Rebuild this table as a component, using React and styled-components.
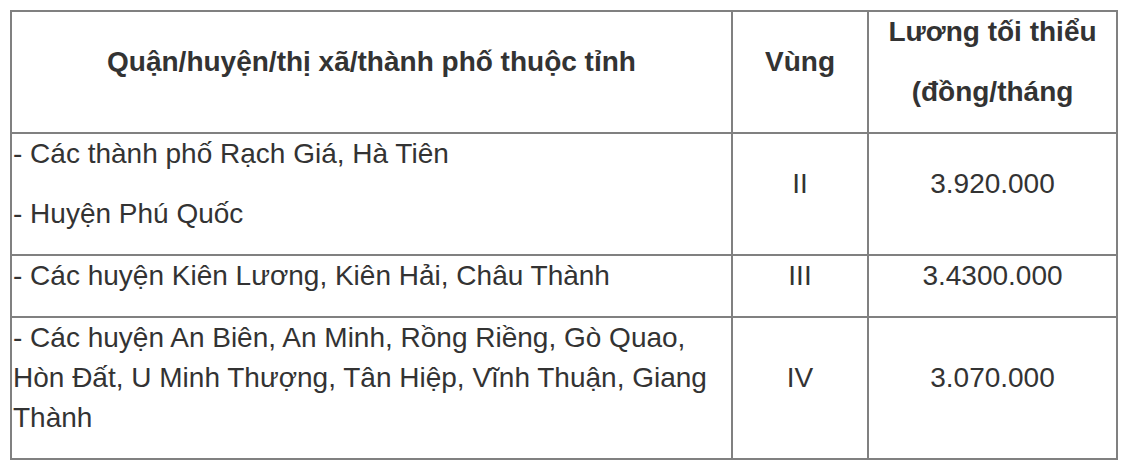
import styled, { createGlobalStyle } from 'styled-components';

const GlobalStyle = createGlobalStyle`
  body {
    margin: 0;
    background: #ffffff;
    font-family: "Liberation Sans", Arial, Helvetica, sans-serif;
    color: #333333;
  }
`;

const Page = styled.div`
  padding: 10px;
`;

const Table = styled.table`
  width: 1106px;
  table-layout: fixed;
  border-collapse: collapse;
  font-size: 28px;
`;

const Cell = styled.td`
  border: 2px solid #808080;
  padding: 0 1px;
  vertical-align: middle;
  text-align: ${props => (props.$left ? 'left' : 'center')};
  font-weight: ${props => (props.$head ? 'bold' : 'normal')};
  p {
    margin: 0 0 20px;
    line-height: 40px;
  }
`;

const rows = [
  {
    place: ['- Các thành phố Rạch Giá, Hà Tiên', '- Huyện Phú Quốc'],
    zone: 'II',
    wage: '3.920.000',
  },
  {
    place: ['- Các huyện Kiên Lương, Kiên Hải, Châu Thành'],
    zone: 'III',
    wage: '3.4300.000',
  },
  {
    place: [
      '- Các huyện An Biên, An Minh, Rồng Riềng, Gò Quao, Hòn Đất, U Minh Thượng, Tân Hiệp, Vĩnh Thuận, Giang Thành',
    ],
    zone: 'IV',
    wage: '3.070.000',
  },
];

const App = () => {
  return (
    <>
      <GlobalStyle />
      <Page>
        <Table>
          <colgroup>
            <col style={{ width: 721 }} />
            <col style={{ width: 136 }} />
            <col style={{ width: 249 }} />
          </colgroup>
          <tbody>
            <tr>
              <Cell $head>
                <p>Quận/huyện/thị xã/thành phố thuộc tỉnh</p>
              </Cell>
              <Cell $head>
                <p>Vùng</p>
              </Cell>
              <Cell $head>
                <p>Lương tối thiểu</p>
                <p>(đồng/tháng</p>
              </Cell>
            </tr>
            {rows.map(row => (
              <tr key={row.zone}>
                <Cell $left>
                  {row.place.map(line => (
                    <p key={line}>{line}</p>
                  ))}
                </Cell>
                <Cell>
                  <p>{row.zone}</p>
                </Cell>
                <Cell>
                  <p>{row.wage}</p>
                </Cell>
              </tr>
            ))}
          </tbody>
        </Table>
      </Page>
    </>
  );
};

export default App;
